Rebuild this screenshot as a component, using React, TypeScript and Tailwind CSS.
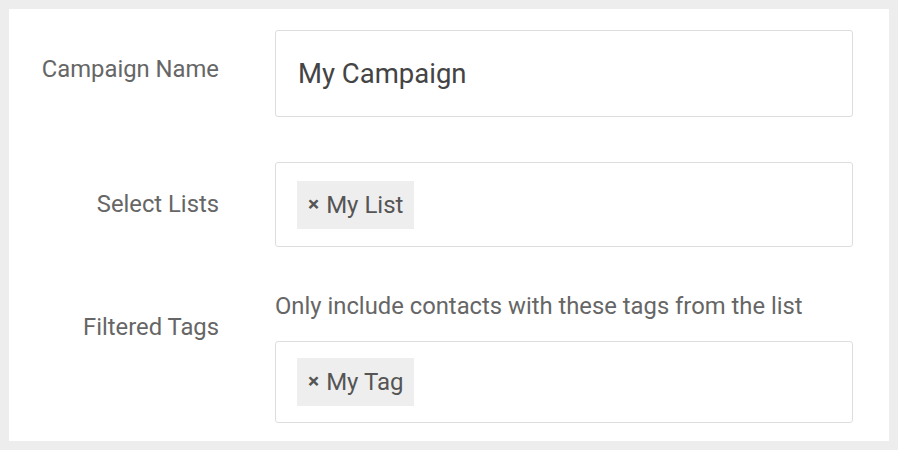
import React from "react";

function Chip({ label }: { label: string }) {
  return (
    <span className="inline-flex h-[48px] items-center bg-[#eeeeee] pl-[11px] pr-[11px] text-[24px] text-[#555]">
      <span className="mr-[7px] text-[21px] font-bold text-[#555]">×</span>
      {label}
    </span>
  );
}

export default function App() {
  return (
    <div className="h-[450px] w-[898px] bg-[#ededed] p-[9px] font-['Roboto',sans-serif]">
      <div className="h-[432px] w-[880px] bg-white pt-[21px]">
        {/* Campaign Name */}
        <div className="flex items-start">
          <div className="mt-[25px] w-[210px] text-right text-[23.8px] leading-[28px] text-[#666]">
            Campaign Name
          </div>
          <div className="ml-[56px] flex h-[87px] w-[578px] items-center rounded-[3px] border border-[#dddddd] px-[22px] text-[27.5px] text-[#444]">
            My Campaign
          </div>
        </div>

        {/* Select Lists */}
        <div className="mt-[45px] flex items-start">
          <div className="mt-[28px] w-[210px] text-right text-[23.8px] leading-[28px] text-[#666]">
            Select Lists
          </div>
          <div className="ml-[56px] flex h-[85px] w-[578px] items-center rounded-[3px] border border-[#dddddd] px-[21px]">
            <Chip label="My List" />
          </div>
        </div>

        {/* Filtered Tags */}
        <div className="mt-[45px] flex items-start">
          <div className="mt-[21px] w-[210px] text-right text-[23.8px] leading-[28px] text-[#666]">
            Filtered Tags
          </div>
          <div className="ml-[56px] w-[578px]">
            <div className="text-[23.8px] leading-[28px] text-[#666]">
              Only include contacts with these tags from the list
            </div>
            <div className="mt-[21px] flex h-[82px] items-center rounded-[3px] border border-[#dddddd] px-[21px]">
              <Chip label="My Tag" />
            </div>
          </div>
        </div>
      </div>
    </div>
  );
}
